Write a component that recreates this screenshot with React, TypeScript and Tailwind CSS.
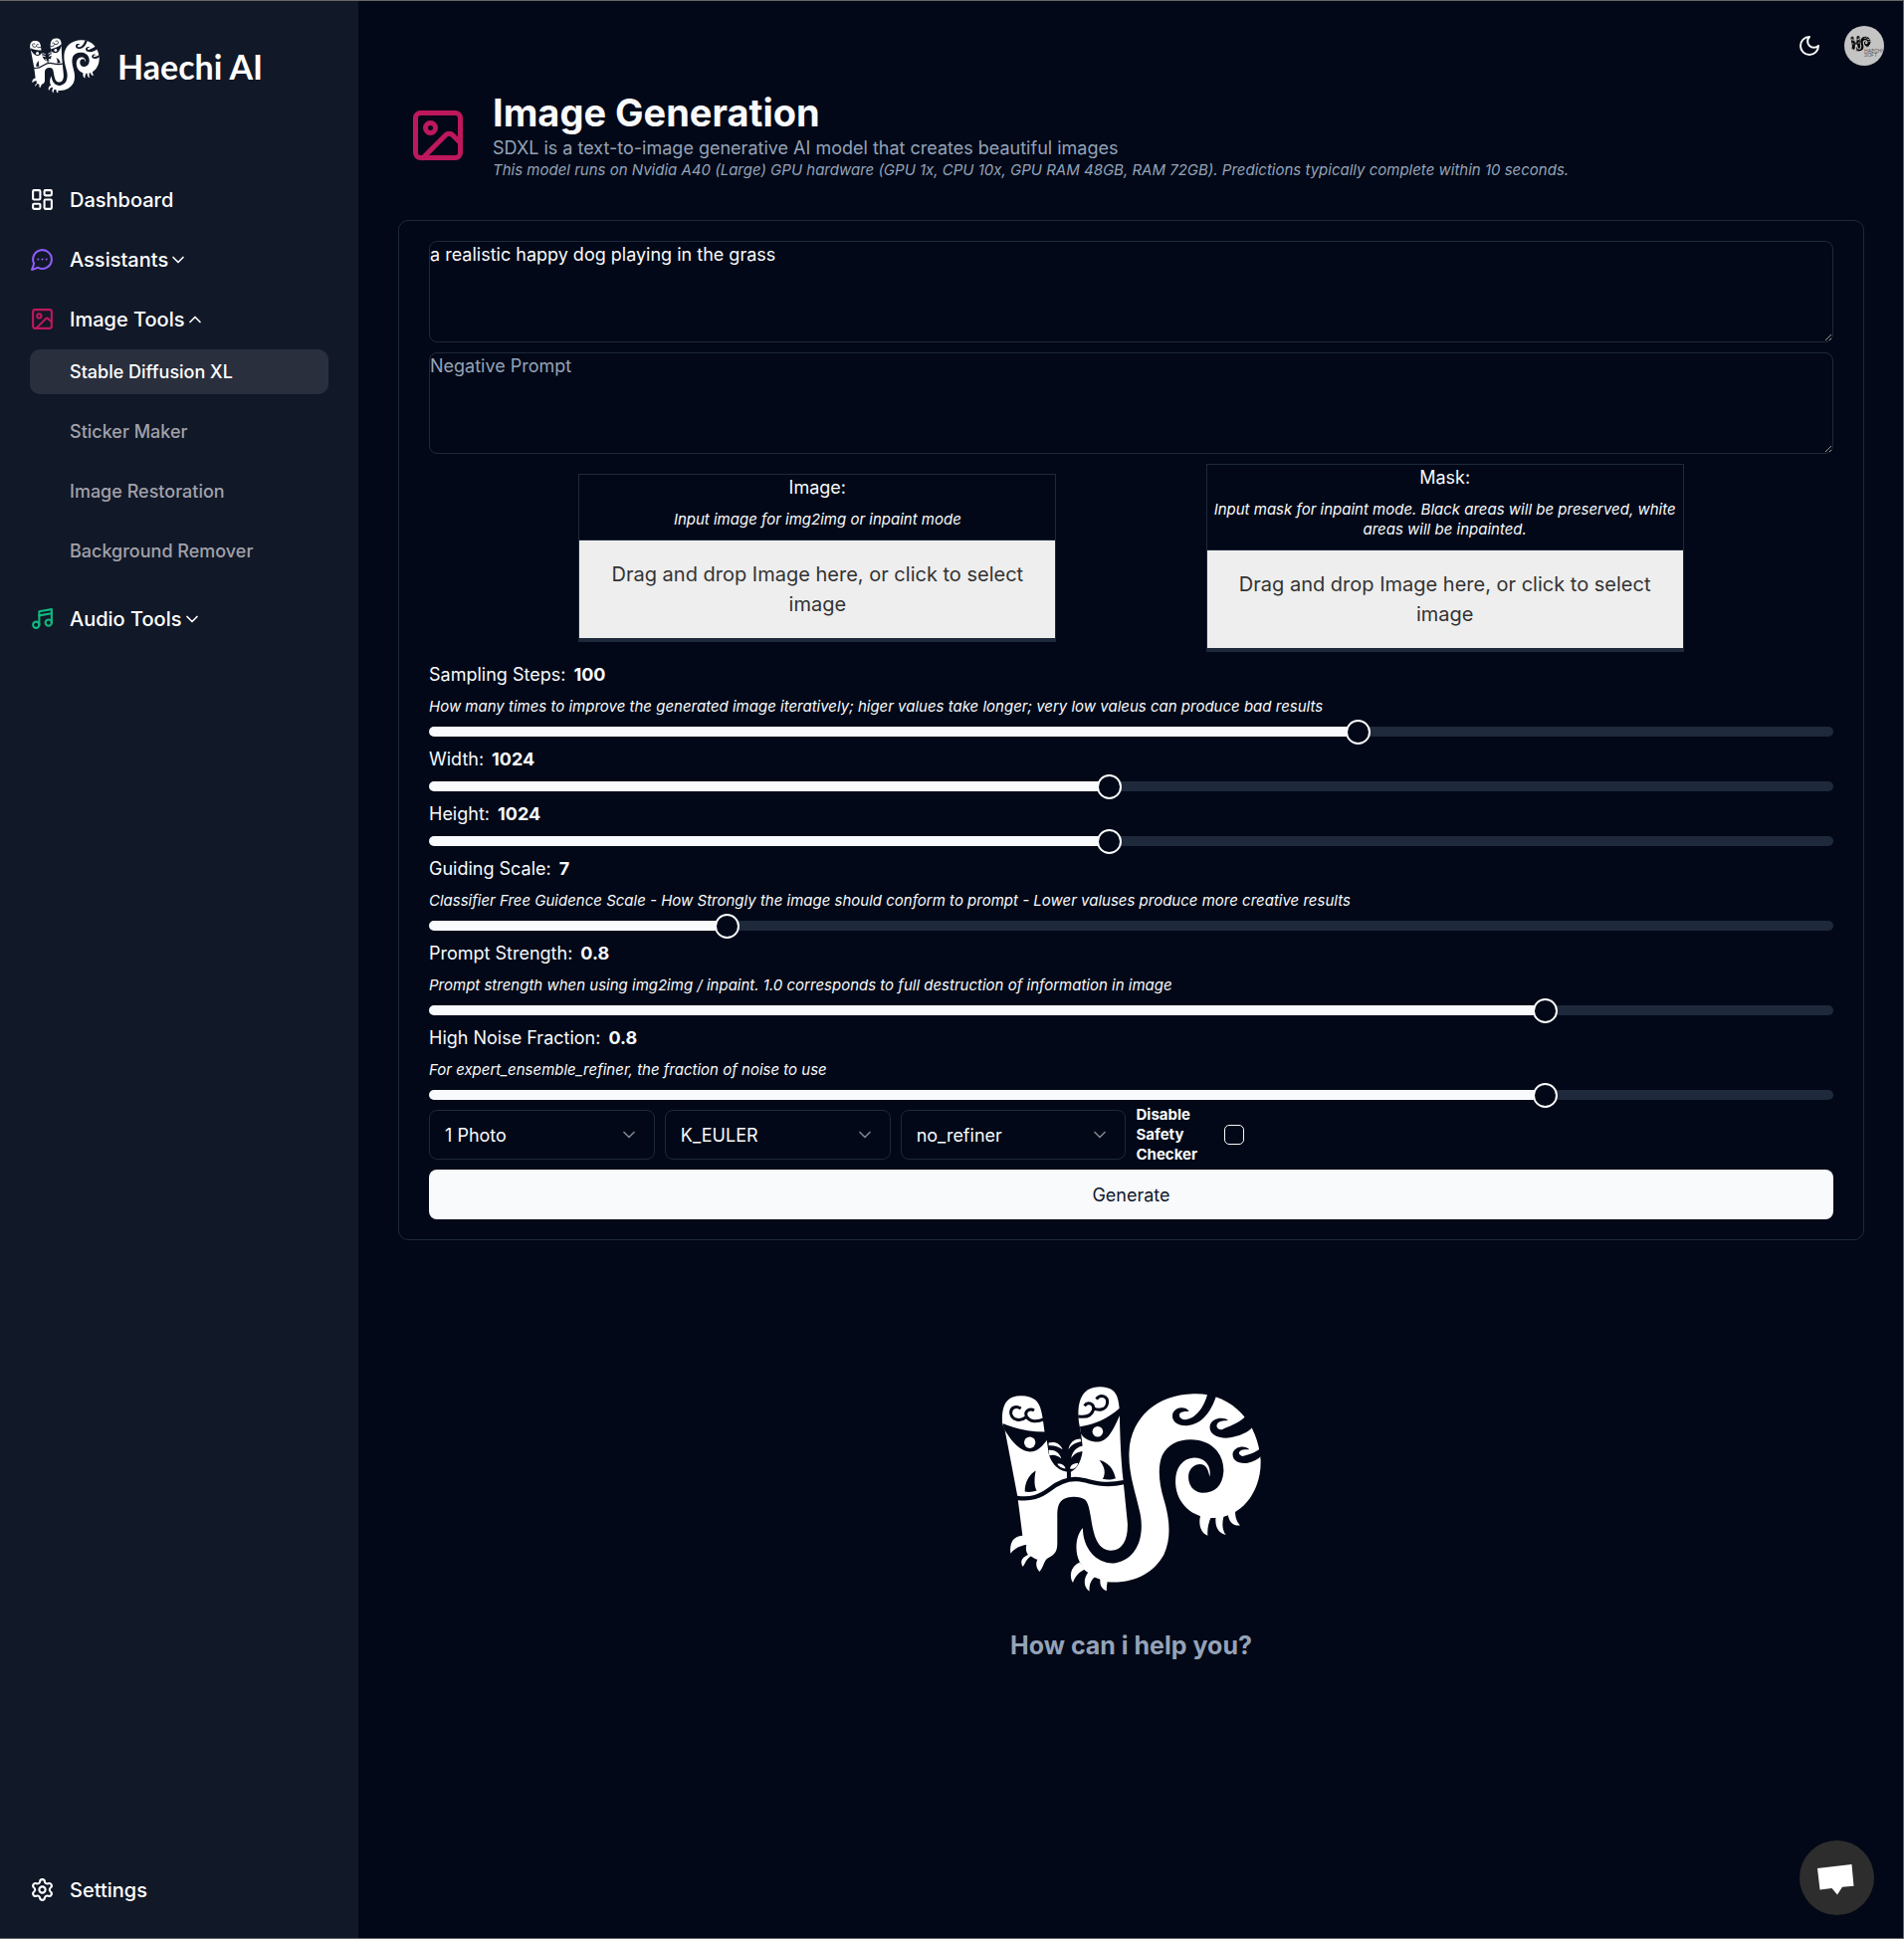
import { useState } from 'react'
import type { ReactNode } from 'react'
import {
  ChevronDown,
  ChevronUp,
  Image as ImageIcon,
  LayoutDashboard,
  Music4,
  Settings,
} from 'lucide-react'

interface LogoProps {
  className?: string
  ink?: string
  cut: string
}

// The cut-outs are painted in the colour of whatever the logo sits on
const Logo = ({ className = '', ink = '#ffffff', cut }: LogoProps) => {
  return (
    <svg viewBox="80 65 785 625" className={className} aria-hidden="true">
      <g fill={ink}>
        <path d="M82 180C80 145 84 112 112 100C138 92 168 96 184 110C199 126 203 150 210 207L216 228L222 270C228 295 245 318 275 325L290 325C310 315 322 290 325 255L320 212L313 175C308 130 315 95 340 78C362 65 398 66 416 80C431 93 434 115 436 140C437 215 440 290 447 350L460 480C462 530 445 562 410 563C372 562 360 525 352 480C346 440 342 420 332 410C318 398 280 397 264 410C249 422 248 440 248 460L248 545C247 568 238 577 219 586C208 592 207 612 194 627C184 615 182 602 188 590C180 588 174 583 168 580C155 588 152 600 144 612C136 600 138 585 160 576C152 566 153 552 155 546C135 548 118 558 107 572C103 540 115 520 143 518L128 400L90 200Z" />
        <path d="M325 495C325 560 370 605 420 601C490 590 512 520 498 450C485 390 462 330 465 265C470 160 550 92 660 90C780 88 855 180 862 290C865 390 800 465 720 465C655 465 608 420 605 360C603 315 625 285 660 283C690 282 715 305 708 340C706 332 705 325 700 315C690 295 655 298 645 330C640 360 655 385 685 389C720 390 747 370 750 325C752 280 725 240 675 230C630 222 585 235 565 275C550 310 555 360 570 410C585 460 595 520 570 575C540 630 480 664 400 658L378 650L358 643L330 622L316 598C300 570 302 520 325 495Z" />
        <path d="M316 598C288 610 283 640 295 660C302 640 315 626 332 620Z" />
        <path d="M342 628C325 650 328 675 345 686C344 665 350 652 362 642Z" />
        <path d="M378 646C375 668 382 680 397 685C396 672 399 662 400 652Z" />
        <path d="M682 452C672 480 680 510 702 518C700 495 706 475 714 458Z" />
        <path d="M727 460C722 490 735 512 757 516C745 500 745 480 751 458Z" />
        <path d="M763 452C765 475 778 490 800 487C788 475 785 460 785 440Z" />
      </g>
      <g fill={cut}>
        <path d="M83 179C120 195 165 205 212 205L218 228C205 245 190 265 165 265C130 262 105 225 87 196Z" />
        <path d="M316 189C360 182 400 165 436 133L438 152C420 190 405 231 372 235C345 235 328 225 319 210Z" />
        <path d="M183 322C165 332 150 355 150 385C162 388 175 386 186 382C178 370 178 345 183 322Z" />
        <path d="M375 290C400 295 418 315 424 345C412 350 398 350 385 347C395 330 392 310 375 290Z" />
        <path d="M702 88C692 130 665 166 633 168C618 167 612 154 620 147C628 142 638 143 646 142C635 127 606 128 597 148C590 170 608 188 640 186C685 182 712 145 728 96Z" />
        <path d="M816 158C795 180 770 185 745 198C728 200 724 182 737 175C748 170 755 171 764 170C748 158 716 163 709 185C704 210 730 225 765 223C800 218 825 206 838 190Z" />
        <path d="M861 254C845 268 825 274 806 278C792 272 795 262 808 259C816 257 822 258 828 258C815 244 785 248 778 268C774 290 795 302 820 299C840 295 855 288 864 277Z" />
      </g>
      <g fill="none" stroke={cut}>
        <path strokeWidth={9} d="M138 134C122 124 106 132 108 150C112 170 138 174 154 160" />
        <path strokeWidth={9} d="M178 140C165 132 148 142 155 158C165 176 188 175 207 167" />
        <path strokeWidth={9} d="M330 126C340 112 360 118 357 138C352 155 335 162 311 158" />
        <path strokeWidth={9} d="M366 106C378 90 402 96 399 118C396 138 375 142 357 134" />
        <path strokeWidth={13} d="M126 404C170 410 195 400 225 378C255 355 280 345 310 348C350 352 380 372 449 357" />
        <path strokeWidth={12} d="M283 320V350" />
      </g>
      <g fill={ink}>
        <circle cx="165" cy="237" r="17" />
        <circle cx="370" cy="204" r="16" />
        <path d="M222 238C240 232 258 240 264 258C250 248 238 245 222 246Z" />
        <path d="M222 260C240 258 255 268 260 285C248 275 236 272 224 276Z" />
        <path d="M282 258C284 240 298 226 318 226L320 234C300 238 290 245 282 258Z" />
        <path d="M290 284C294 262 308 250 326 247L326 264C310 264 298 272 290 284Z" />
        <path d="M248 302C258 299 270 305 273 316C262 316 252 310 248 302Z" />
        <path d="M311 299C308 312 298 318 286 316C288 304 298 299 311 299Z" />
      </g>
    </svg>
  )
}

const iconProps = {
  viewBox: '0 0 24 24',
  fill: 'none',
  stroke: 'currentColor',
  strokeWidth: 2,
  strokeLinecap: 'round' as const,
  strokeLinejoin: 'round' as const,
  'aria-hidden': true,
}

const ChatIcon = ({ className = '' }: { className?: string }) => (
  <svg {...iconProps} className={className}>
    <path d="M7.9 20A9 9 0 1 0 4 16.1L2 22Z" />
    <path d="M8 12h.01M12 12h.01M16 12h.01" />
  </svg>
)

const MoonIcon = ({ className = '' }: { className?: string }) => (
  <svg {...iconProps} className={className}>
    <path d="M12 3a6 6 0 0 0 9 9 9 9 0 1 1-9-9Z" />
  </svg>
)

interface NavItemProps {
  icon: ReactNode
  label: string
  open?: boolean
  children?: ReactNode
}

const NavItem = ({ icon, label, open, children }: NavItemProps) => {
  return (
    <li>
      <a href="#" className="flex h-[45px] items-center text-[20px] font-medium">
        <span className="mr-[15px]">{icon}</span>
        {label}
        {open === true && <ChevronUp className="size-5" />}
        {open === false && <ChevronDown className="size-5" />}
      </a>
      {children}
    </li>
  )
}

const imageTools = [
  { label: 'Stable Diffusion XL', active: true },
  { label: 'Sticker Maker', active: false },
  { label: 'Image Restoration', active: false },
  { label: 'Background Remover', active: false },
]

const Sidebar = () => {
  return (
    <aside className="flex w-[360px] shrink-0 flex-col bg-[#111827] px-[30px] pt-[37px] pb-[26px] text-white">
      <a href="#" className="flex items-center gap-[18px]">
        <Logo className="h-[56px] w-[70px]" cut="#111827" />
        <span className="font-['Lato',sans-serif] text-[34px] font-bold">
          Haechi AI
        </span>
      </a>
      <nav className="mt-[84px] flex grow flex-col justify-between">
        <ul className="flex flex-col gap-[15px]">
          <NavItem
            icon={<LayoutDashboard className="size-[25px]" />}
            label="Dashboard"
          />
          <NavItem
            icon={<ChatIcon className="size-[25px] text-[#8b5cf6]" />}
            label="Assistants"
            open={false}
          />
          <NavItem
            icon={<ImageIcon className="size-[25px] text-[#be185d]" />}
            label="Image Tools"
            open={true}
          >
            <ul className="my-2 flex flex-col gap-[15px]">
              {imageTools.map((tool) => (
                <li key={tool.label}>
                  <a
                    href="#"
                    className={`flex h-[45px] items-center rounded-[10px] pl-10 text-[18px] font-medium ${
                      tool.active ? 'bg-white/10 text-white' : 'text-[#a1a1aa]'
                    }`}
                  >
                    {tool.label}
                  </a>
                </li>
              ))}
            </ul>
          </NavItem>
          <NavItem
            icon={<Music4 className="size-[25px] text-[#10b981]" />}
            label="Audio Tools"
            open={false}
          />
        </ul>
        <ul>
          <NavItem
            icon={<Settings className="size-[25px]" />}
            label="Settings"
          />
        </ul>
      </nav>
    </aside>
  )
}

interface DropzoneProps {
  label: string
  hint: string
}

const Dropzone = ({ label, hint }: DropzoneProps) => {
  return (
    <div className="w-[480px] border border-b-4 border-[#1e293b] text-center">
      <p className="leading-[25px]">{label}</p>
      <p className="my-[10px] px-1 text-[15px] leading-5 italic">{hint}</p>
      <label className="block cursor-pointer border-t border-[#1e293b] bg-[#eeeeee] bg-clip-padding px-5 py-[19px] text-[20px] leading-[30px] text-[#333333]">
        Drag and drop Image here, or click to select image
        <input type="file" accept="image/*" className="hidden" />
      </label>
    </div>
  )
}

interface SliderProps {
  id: string
  label: string
  hint?: string
  min: number
  max: number
  step: number
  initial: number
}

const Slider = ({ id, label, hint, min, max, step, initial }: SliderProps) => {
  const [value, setValue] = useState(initial)
  const ratio = (value - min) / (max - min)
  const stop = `calc(12px + ${ratio} * (100% - 25px))`

  return (
    <div className="flex flex-col gap-[10px]">
      <label htmlFor={id} className="leading-[25px]">
        {label}:<span className="ml-2 font-bold">{value}</span>
      </label>
      {hint && <p className="text-[15px] leading-5 italic">{hint}</p>}
      <input
        id={id}
        type="range"
        min={min}
        max={max}
        step={step}
        value={value}
        onChange={(e) => setValue(Number(e.target.value))}
        className="block h-[10px] w-full cursor-pointer appearance-none rounded-full [&::-webkit-slider-thumb]:size-[25px] [&::-webkit-slider-thumb]:appearance-none [&::-webkit-slider-thumb]:rounded-full [&::-webkit-slider-thumb]:border-2 [&::-webkit-slider-thumb]:border-[#f8fafc] [&::-webkit-slider-thumb]:bg-[#020817]"
        style={{
          background: `linear-gradient(to right, #f8fafc ${stop}, #1e293b ${stop})`,
        }}
      />
    </div>
  )
}

interface SelectProps {
  label: string
  options: string[]
}

const Select = ({ label, options }: SelectProps) => {
  return (
    <div className="relative">
      <select
        aria-label={label}
        className="h-[50px] w-full appearance-none rounded-[8px] border border-[#1e293b] bg-[#020817] px-[15px]"
      >
        {options.map((option) => (
          <option key={option}>{option}</option>
        ))}
      </select>
      <ChevronDown className="pointer-events-none absolute top-[15px] right-4 size-5 opacity-50" />
    </div>
  )
}

const sliders: SliderProps[] = [
  {
    id: 'steps',
    label: 'Sampling Steps',
    hint: 'How many times to improve the generated image iteratively; higer values take longer; very low valeus can produce bad results',
    min: 1,
    max: 150,
    step: 1,
    initial: 100,
  },
  { id: 'width', label: 'Width', min: 64, max: 2048, step: 64, initial: 1024 },
  { id: 'height', label: 'Height', min: 64, max: 2048, step: 64, initial: 1024 },
  {
    id: 'scale',
    label: 'Guiding Scale',
    hint: 'Classifier Free Guidence Scale - How Strongly the image should conform to prompt - Lower valuses produce more creative results',
    min: 1,
    max: 30,
    step: 1,
    initial: 7,
  },
  {
    id: 'strength',
    label: 'Prompt Strength',
    hint: 'Prompt strength when using img2img / inpaint. 1.0 corresponds to full destruction of information in image',
    min: 0,
    max: 1,
    step: 0.1,
    initial: 0.8,
  },
  {
    id: 'noise',
    label: 'High Noise Fraction',
    hint: 'For expert_ensemble_refiner, the fraction of noise to use',
    min: 0,
    max: 1,
    step: 0.1,
    initial: 0.8,
  },
]

const GenerationForm = () => {
  return (
    <form
      onSubmit={(e) => e.preventDefault()}
      className="flex flex-col gap-[10px] rounded-[10px] border border-[#1e293b] px-[30px] py-5"
    >
      <textarea
        aria-label="Prompt"
        defaultValue="a realistic happy dog playing in the grass"
        className="h-[102px] w-full rounded-[8px] border border-[#1e293b] bg-transparent leading-[25px] scheme-dark"
      />
      <textarea
        aria-label="Negative Prompt"
        placeholder="Negative Prompt"
        className="h-[102px] w-full rounded-[8px] border border-[#1e293b] bg-transparent leading-[25px] scheme-dark placeholder:text-[#94a3b8]"
      />
      <div className="flex items-center justify-evenly">
        <Dropzone label="Image:" hint="Input image for img2img or inpaint mode" />
        <Dropzone
          label="Mask:"
          hint="Input mask for inpaint mode. Black areas will be preserved, white areas will be inpainted."
        />
      </div>
      {sliders.map((slider) => (
        <Slider key={slider.id} {...slider} />
      ))}
      <div className="grid grid-cols-6 gap-[10px]">
        <Select label="Number of photos" options={['1 Photo', '2 Photos', '3 Photos', '4 Photos']} />
        <Select label="Scheduler" options={['K_EULER', 'DDIM', 'DPMSolverMultistep']} />
        <Select label="Refiner" options={['no_refiner', 'expert_ensemble_refiner', 'base_image_refiner']} />
        <div className="flex h-[50px] items-center gap-5">
          <label htmlFor="safety" className="w-[69px] text-[15px] leading-5 font-bold">
            Disable Safety Checker
          </label>
          <input
            id="safety"
            type="checkbox"
            className="size-5 appearance-none rounded-[5px] border border-[#f8fafc] checked:bg-[#f8fafc]"
          />
        </div>
      </div>
      <button type="submit" className="h-[50px] rounded-[8px] bg-[#f8fafc] text-[#0f172a]">
        Generate
      </button>
    </form>
  )
}

export default function App() {
  return (
    <div className="flex min-h-screen border-t border-r border-b border-[#666666] bg-[#020817] font-['Inter',sans-serif] text-[18px] text-[#f8fafc]">
      <Sidebar />
      <main className="min-w-0 grow">
        <header className="flex items-center justify-end gap-[10px] py-[25px] pr-[19px]">
          <button type="button" aria-label="Toggle theme" className="flex h-10 w-[50px] items-center justify-center">
            <MoonIcon className="size-6" />
          </button>
          <button type="button" aria-label="Account" className="relative size-10 rounded-full bg-[#c4c4c4]">
            <Logo className="mb-1 ml-[6px] h-4 w-[21px]" ink="#000000" cut="#c4c4c4" />
            <span className="absolute top-[23px] left-5 text-left text-[5px] leading-[4px] text-[#555555]">
              HAECHI
              <br />
              SOFT
            </span>
          </button>
        </header>
        <div className="pr-[39px] pl-10">
          <div className="mb-10 flex items-center">
            <ImageIcon className="mx-[10px] size-[60px] text-[#be185d]" />
            <div className="ml-[15px] text-[#94a3b8]">
              <h1 className="text-[38px] leading-[45px] font-bold text-[#f8fafc]">
                Image Generation
              </h1>
              <p className="leading-[25px]">
                SDXL is a text-to-image generative AI model that creates beautiful images
              </p>
              <p className="text-[15px] leading-5 italic">
                This model runs on Nvidia A40 (Large) GPU hardware (GPU 1x, CPU 10x, GPU RAM 48GB, RAM 72GB). Predictions typically complete within 10 seconds.
              </p>
            </div>
          </div>
          <GenerationForm />
          <div className="flex flex-col items-center pt-[146px]">
            <Logo className="h-[208px] w-[262px]" cut="#020817" />
            <p className="mt-9 text-[25px] leading-[35px] font-bold text-[#94a3b8]">
              How can i help you?
            </p>
          </div>
        </div>
      </main>
      <button
        type="button"
        aria-label="Open chat"
        className="fixed right-[30px] bottom-6 size-[75px] rounded-full bg-[#2d2d2d]"
      >
        <svg viewBox="0 0 75 75" fill="#ffffff" aria-hidden="true">
          <path d="M18 28L52.500 24L54.500 45.700L43 46.700L38 54.500L32.500 48L20.500 49.500Z" />
        </svg>
      </button>
    </div>
  )
}
